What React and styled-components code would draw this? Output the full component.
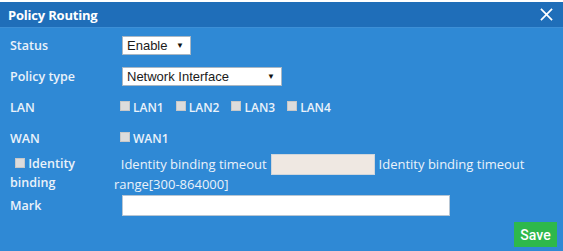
import React from "react";
import styled, { createGlobalStyle } from "styled-components";

const GlobalStyle = createGlobalStyle`
  html, body {
    margin: 0;
    padding: 0;
    background: #ffffff;
  }
  body {
    font-family: "Open Sans", "Noto Sans", sans-serif;
  }
`;

const Dialog = styled.div`
  width: 563px;
  height: 251px;
  padding-top: 2px;
  box-sizing: border-box;
  display: flex;
  flex-direction: column;
  background: #ffffff;
`;

const Header = styled.div`
  height: 25px;
  background: #1f6eb9;
  display: flex;
  align-items: center;
  justify-content: space-between;
  padding: 0 10px 0 8px;
  border-bottom: 1px solid #3d8fd6;
`;

const Title = styled.h2`
  margin: 0;
  font-size: 13px;
  font-weight: 700;
  color: #ffffff;
  letter-spacing: -0.2px;
`;

const Close = styled.svg`
  width: 13px;
  height: 13px;
  display: block;
`;

const Body = styled.div`
  flex: 1;
  background: #2f89d5;
  padding: 2px 6px 0 10px;
  display: flex;
  flex-direction: column;
`;

const Row = styled.div`
  display: flex;
  align-items: ${(p) => (p.$top ? "flex-start" : "center")};
  height: ${(p) => p.$h || 31}px;
`;

const Label = styled.div`
  width: 104px;
  flex-shrink: 0;
  font-size: 12.5px;
  font-weight: 600;
  color: #eaf2fa;
  line-height: 19px;
`;

const Value = styled.div`
  flex: 1;
  display: flex;
  align-items: center;
  flex-wrap: wrap;
  gap: ${(p) => p.$gap || 0}px;
`;

const FakeSelect = styled.div`
  margin-left: 8px;
  width: ${(p) => p.$w}px;
  height: 19px;
  box-sizing: border-box;
  background: #ffffff;
  border: 1px solid #a9b7c4;
  display: flex;
  align-items: center;
  justify-content: space-between;
  padding: 0 6px 0 4px;
  font-family: "Liberation Sans", Arial, sans-serif;
  font-size: 13px;
  color: #1a1a1a;
`;

const Arrow = styled.span`
  font-size: 8px;
  color: #111;
`;

const Check = styled.label`
  display: flex;
  align-items: center;
  gap: 3px;
  font-size: 12px;
  font-weight: 600;
  color: #eaf2fa;
  margin-left: ${(p) => p.$ml || 0}px;
`;

const Box = styled.span`
  width: 10px;
  height: 10px;
  background: #dcdcdc;
  border: 1px solid #c8c8c8;
  box-sizing: border-box;
  display: inline-block;
  margin-top: -3px;
  margin-left: ${(p) => p.$ml || 0}px;
`;

const Text = styled.span`
  font-size: 13px;
  color: #eaf2fa;
  line-height: 19px;
`;

const TimeoutInput = styled.div`
  width: 104px;
  height: 21px;
  margin: 0 4px 0 4px;
  box-sizing: border-box;
  background: #efe8e2;
  border: 1px solid #cfd6dc;
`;

const MarkInput = styled.div`
  margin-left: 8px;
  width: 328px;
  height: 21px;
  box-sizing: border-box;
  background: #ffffff;
  border: 1px solid #b7c6d4;
`;

const Footer = styled.div`
  display: flex;
  justify-content: flex-end;
  margin-top: 3px;
`;

const SaveButton = styled.button`
  background: #2eb84b;
  color: #ffffff;
  border: none;
  font-family: "Roboto", "Noto Sans", sans-serif;
  font-size: 14px;
  font-weight: 500;
  height: 25px;
  width: 43px;
  padding: 0;
`;

function CheckItem({ label, ml }) {
  return (
    <Check $ml={ml}>
      <Box />
      {label}
    </Check>
  );
}

export default function App() {
  return (
    <>
      <GlobalStyle />
      <Dialog>
        <Header>
          <Title>Policy Routing</Title>
          <Close viewBox="0 0 14 14">
            <path d="M1 1 L13 13 M13 1 L1 13" stroke="#ffffff" strokeWidth="1.8" />
          </Close>
        </Header>
        <Body>
          <Row>
            <Label>Status</Label>
            <Value>
              <FakeSelect $w={69}>
                Enable <Arrow>▼</Arrow>
              </FakeSelect>
            </Value>
          </Row>
          <Row>
            <Label>Policy type</Label>
            <Value>
              <FakeSelect $w={160}>
                Network Interface <Arrow>▼</Arrow>
              </FakeSelect>
            </Value>
          </Row>
          <Row>
            <Label>LAN</Label>
            <Value $gap={12}>
              <CheckItem label="LAN1" ml={6} />
              <CheckItem label="LAN2" />
              <CheckItem label="LAN3" />
              <CheckItem label="LAN4" />
            </Value>
          </Row>
          <Row>
            <Label>WAN</Label>
            <Value>
              <CheckItem label="WAN1" ml={6} />
            </Value>
          </Row>
          <Row $top $h={38}>
            <Label>
              <Box $ml={5} /> Identity binding
            </Label>
            <Value>
              <Text>&nbsp;&nbsp;Identity binding timeout</Text>
              <TimeoutInput />
              <Text>Identity binding timeout</Text>
              <Text>range[300-864000]</Text>
            </Value>
          </Row>
          <Row $h={27}>
            <Label>Mark</Label>
            <Value>
              <MarkInput />
            </Value>
          </Row>
          <Footer>
            <SaveButton>Save</SaveButton>
          </Footer>
        </Body>
      </Dialog>
    </>
  );
}
